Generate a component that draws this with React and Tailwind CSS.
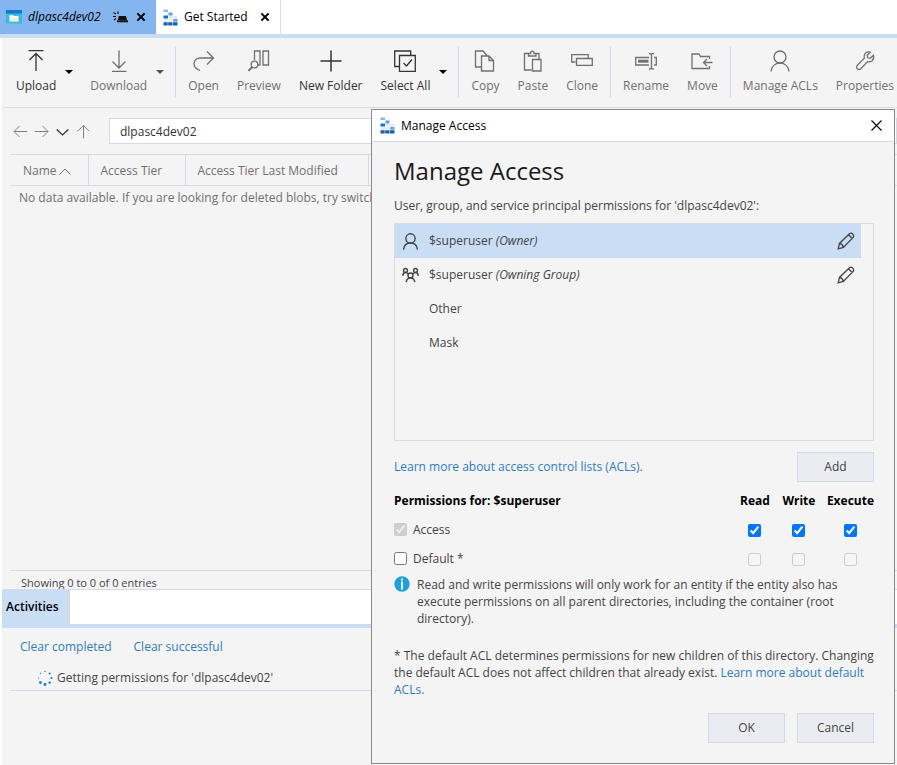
import React, { useState } from 'react';

const Icon = ({ size = 22, className = '', children }) => (
  <svg
    width={size}
    height={size}
    viewBox="0 0 22 22"
    fill="none"
    stroke="currentColor"
    strokeWidth="1.3"
    className={`shrink-0 ${className}`}
    aria-hidden="true"
  >
    {children}
  </svg>
);

const icons = {
  upload: <path d="M3.5 0.7h15M11 21V3.5M4.5 10L11 3.5l6.500 6.500" />,
  download: <path d="M4 21.300h14.500M11 0.500V17.500M4.500 11.500L11 18l6.500-6.500" />,
  open: <path d="M7 20.500C3 19 1 16.500 1 13.500 1 10 4 8 7 8h13.500M14 1.500L20.500 8 14 14.500" />,
  preview: (
    <>
      <path d="M6.500 10V1h5.500v14H10M15 1h5.500v14H15z" />
      <circle cx="6.500" cy="14.500" r="3.300" />
      <path d="M4.200 17L0.500 20.800" strokeWidth="1.800" />
    </>
  ),
  newFolder: <path d="M11 0.500v21M0.500 11h21" strokeWidth="1.500" />,
  selectAll: <path d="M5 16.500H0.700V1h16v4M5.500 5.500h15.800v15.800H5.500zM9.500 13l3 3 5.500-6.500" />,
  copy: <path d="M7.500 17H1.500V1h7.500l4 4.500M7.500 6h7.500l4.500 4.500v10.500H7.500zM15 6v4.500h4.500" />,
  paste: <path d="M9.500 20H2.500V3.500h4M13.500 3.500h3.500V9M6.500 6V3.500h2c0-3.300 3.500-3.300 3.500 0h2V6zM10.500 9.500h8.500v11.500h-8.500z" />,
  clone: <path d="M4.500 12H0.700V4.700h16.500V8.500M5.500 8.500h15.800v6.800H5.500z" />,
  rename: (
    <>
      <path d="M14 7.500H0.700v7.500H14M19 7.500h2.300v7.500H19M14 3.500c1.500 0 2.500 0.300 2.500 1.200 0-0.900 1-1.200 2.500-1.200M16.500 4.500v13.500M14 19c1.500 0 2.500-0.300 2.500-1.200 0 0.900 1 1.200 2.500 1.200" />
      <path d="M3 11.200h10.500" strokeWidth="3" />
    </>
  ),
  move: <path d="M18.500 16v2.500H1V4h7l1.500 2.500h9V9M21.500 12.500H12.500M16 9l-3.500 3.500L16 16" />,
  user: (
    <>
      <circle cx="11" cy="7" r="6" />
      <path d="M2 21.500c0.500-5 4-8.500 9-8.500s8.500 3.500 9 8.500" />
    </>
  ),
  wrench: <path d="M19.500 5.300l-3.300 3-2.500-0.500-0.500-2.500 3-3.100c-2.300-0.700-4.700 0.300-5.600 2.300-0.600 1.300-0.600 2.500-0.200 3.700L3.400 15.300c-1 1-1 2.500 0 3.400s2.500 1 3.400 0l6.900-7.100c1.500 0.500 2.900 0.200 4.100-0.700 1.700-1.400 2.200-3.600 1.700-5.600z" />,
  group: (
    <>
      <circle cx="11" cy="11" r="3.200" />
      <circle cx="4.500" cy="4.500" r="2.500" />
      <circle cx="17.500" cy="4.500" r="2.500" />
      <path d="M5.500 19.500c0.300-3.500 2.500-5.300 5.500-5.300s5.200 1.800 5.500 5.300M0.900 11.500c0.200-2.700 1.500-4.300 3.600-4.300 1.600 0 2.700 0.900 3.400 2M21.100 11.500c-0.200-2.700-1.500-4.300-3.600-4.300-1.600 0-2.700 0.900-3.400 2" />
    </>
  ),
  pencil: <path d="M1.500 20.500l1.500-6.500L15.500 1.800c2.500-1.500 5.800 1.500 4.500 4.500L7.800 18.800zM3 14c2.500 0.500 4.300 2.300 4.800 4.800M14 3.300l4.600 4.600" />,
  back: <path d="M21 11H2M9.500 3l-8 8 8 8" />,
  forward: <path d="M1 11h19M12.500 3l8 8-8 8" />,
  down: <path d="M2.500 8l8.500 8 8.500-8" strokeWidth="2" />,
  up: <path d="M11 21V2M2.500 10.500L11 2l8.500 8.500" />,
  close: <path d="M3 3l16 16M19 3L3 19" strokeWidth="4.500" />,
  closeThin: <path d="M1 1l20 20M21 1L1 21" strokeWidth="2.200" />,
};

const StorageLogo = () => (
  <svg width="15" height="17" viewBox="0 0 15 17" className="shrink-0" aria-hidden="true">
    <path fill="#83b9f9" d="M0.500 0.500h4.500v2.500H0.500z" />
    <path fill="#5ea0ef" d="M5.500 3.500h4v3h-4z" />
    <path fill="#0078d4" d="M0.500 6.500h4.500v3H0.500z" />
    <path fill="#e3e8f0" d="M5.500 7h4v2.500h-4zM10.200 7h4v2.500h-4zM0.500 10.200h4.500v2.500H0.500zM5.500 10.200h4v2.500h-4z" />
    <path fill="#5ea0ef" d="M10.200 10h4.300v2.700h-4.300z" />
    <path fill="#1b5fa8" d="M0.500 13.200h4.200v3.200H0.500zM5.200 13.200h4.300v3.200H5.200zM10 13.200h4.500v3.200H10z" />
  </svg>
);

const ContainerIcon = () => (
  <svg width="16" height="14" viewBox="0 0 16 14" className="shrink-0" aria-hidden="true">
    <rect width="16" height="13.500" rx="1" fill="#32bedd" />
    <path fill="#0f78d0" d="M0 1a1 1 0 0 1 1-1h14a1 1 0 0 1 1 1v2.500H0z" />
    <path fill="#fff" d="M3.500 5h3.500l1 1h4.500v5.500h-9z" />
    <path fill="#fbeccb" d="M4 7.500h8v3.500H4z" />
  </svg>
);

const SirenIcon = () => (
  <svg width="15" height="12" viewBox="0 0 15 12" className="mr-0.5 shrink-0" aria-hidden="true">
    <path d="M5 9l0.700-4h7.300l1 4zM4 9.300h11V11.300H4z" fill="#111" />
    <path d="M0.500 1.500l2.500 1.500M0 5.500h3M5 0.500v2.500M1 9l2-1.500" stroke="#111" strokeWidth="1.200" fill="none" />
  </svg>
);

const Spinner = () => (
  <svg width="16" height="16" viewBox="0 0 16 16" fill="#0f78d0" className="shrink-0" aria-hidden="true">
    <circle cx="8" cy="1.500" r="0.700" />
    <circle cx="12.600" cy="3.400" r="1" />
    <circle cx="14.500" cy="8" r="1.100" />
    <circle cx="12.600" cy="12.600" r="1.200" />
    <circle cx="8" cy="14.500" r="1.400" />
    <circle cx="3.400" cy="12.600" r="1.400" />
    <circle cx="1.500" cy="8" r="0.600" />
    <circle cx="3.400" cy="3.400" r="0.600" />
  </svg>
);

const InfoIcon = () => (
  <svg width="16" height="16" viewBox="0 0 16 16" className="shrink-0" aria-hidden="true">
    <circle cx="8" cy="8" r="7.700" fill="#1ba1e2" />
    <path d="M7 2.500h2v2H7zM7 5.500h2v8H7z" fill="#fff" />
  </svg>
);

const toolbar = [
  [
    { label: 'Upload', icon: 'upload', menu: true, enabled: true },
    { label: 'Download', icon: 'download', menu: true },
  ],
  [
    { label: 'Open', icon: 'open' },
    { label: 'Preview', icon: 'preview' },
    { label: 'New Folder', icon: 'newFolder', enabled: true },
    { label: 'Select All', icon: 'selectAll', menu: true, enabled: true },
  ],
  [
    { label: 'Copy', icon: 'copy' },
    { label: 'Paste', icon: 'paste' },
    { label: 'Clone', icon: 'clone' },
  ],
  [
    { label: 'Rename', icon: 'rename' },
    { label: 'Move', icon: 'move' },
  ],
  [
    { label: 'Manage ACLs', icon: 'user' },
    { label: 'Properties', icon: 'wrench' },
  ],
];

const ToolbarButton = ({ label, icon, menu, enabled }) => (
  <div className={`flex items-center ${enabled ? 'text-[#333]' : 'text-[#707070]'}`}>
    <button type="button" className="flex flex-col items-center gap-1.5 px-[9px] whitespace-nowrap">
      <Icon>{icons[icon]}</Icon>
      <span className="leading-4">{label}</span>
    </button>
    {menu && (
      <button type="button" aria-label={`${label} options`} className="pr-2">
        <svg
          width="8"
          height="4"
          viewBox="0 0 8 4"
          className={enabled ? 'fill-black' : 'fill-[#555]'}
          aria-hidden="true"
        >
          <path d="M0 0h8L4 4z" />
        </svg>
      </button>
    )}
  </div>
);

const TabBar = () => (
  <div className="flex h-[38px] border-b-4 border-[#c9ddf5] bg-white text-black">
    <div className="flex w-[156px] items-center gap-1.5 bg-[#84b5ee] pl-1.5">
      <ContainerIcon />
      <span className="flex-1 italic">dlpasc4dev02</span>
      <SirenIcon />
      <button type="button" aria-label="Close dlpasc4dev02" className="pr-2.5">
        <Icon size={10}>{icons.close}</Icon>
      </button>
    </div>
    <div className="flex w-[125px] items-center gap-1.5 border-r border-[#d9dbe6] pl-[7px]">
      <StorageLogo />
      <span className="flex-1 whitespace-nowrap">Get Started</span>
      <button type="button" aria-label="Close Get Started" className="pr-2.5">
        <Icon size={10}>{icons.close}</Icon>
      </button>
    </div>
  </div>
);

const Toolbar = () => (
  <div className="flex h-[70px] items-center divide-x divide-[#d5d8e6] overflow-hidden border-b border-[#d9dbe6] pb-0.5 pl-0.5">
    {toolbar.map((group, i) => (
      <div key={i} className="flex h-[50px] shrink-0 items-center px-[3px]">
        {group.map((item) => (
          <ToolbarButton key={item.label} {...item} />
        ))}
      </div>
    ))}
  </div>
);

const PathBar = () => (
  <div className="flex h-[46px] items-center gap-1.5 pl-[11px] text-[#707070]">
    {['back', 'forward', 'down', 'up'].map((name) => (
      <button key={name} type="button" aria-label={name}>
        <Icon size={15} className={name === 'down' ? 'text-[#333]' : ''}>{icons[name]}</Icon>
      </button>
    ))}
    <input
      type="text"
      aria-label="Path"
      defaultValue="dlpasc4dev02"
      className="ml-3 h-[26px] flex-1 border border-[#d5d8e6] bg-white px-2.5 text-[#333]"
    />
  </div>
);

const BlobTable = () => (
  <div className="ml-[9px] flex-1 overflow-hidden border-b border-[#d5d8e6]">
    <table className="w-full border-y border-[#d5d8e6] text-left text-[#707070]">
      <thead>
        <tr className="h-[31px]">
          <th className="w-[77px] border-r border-[#d5d8e6] pt-0.5 pl-3 font-normal">
            <span className="flex items-center gap-0.5">
              Name
              <svg width="12" height="7" viewBox="0 0 12 7" fill="none" stroke="currentColor" aria-hidden="true">
                <path d="M0.500 6.500L6 1l5.500 5.500" />
              </svg>
            </span>
          </th>
          <th className="w-[97px] border-r border-[#d5d8e6] pt-0.5 pl-3 font-normal">Access Tier</th>
          <th className="w-[183px] border-r border-[#d5d8e6] pt-0.5 pl-3 font-normal">Access Tier Last Modified</th>
          <th></th>
        </tr>
      </thead>
    </table>
    <p className="pt-[3px] pl-2 whitespace-nowrap text-[#707070]">
      No data available. If you are looking for deleted blobs, try switching
    </p>
  </div>
);

const Activities = () => (
  <section className="h-[176px]">
    <div className="flex h-[39px] border-t border-b-4 border-t-[#d5d8e6] border-b-[#c9ddf5] bg-white">
      <h2 className="flex w-[68px] items-center border-r border-[#d5d8e6] bg-[#c9ddf5] pl-1 font-semibold text-black">
        Activities
      </h2>
    </div>
    <div className="flex gap-[22px] pt-2.5 pl-[18px] text-[#2f7cc4]">
      <button type="button">Clear completed</button>
      <button type="button">Clear successful</button>
    </div>
    <div className="mt-[9px] ml-[9px] flex items-center gap-1 border-b border-[#d5d8e6] pt-1 pb-[3px] pl-[26px]">
      <Spinner />
      <span>Getting permissions for 'dlpasc4dev02'</span>
    </div>
  </section>
);

const entities = [
  { name: '$superuser', role: '(Owner)', icon: 'user', editable: true },
  { name: '$superuser', role: '(Owning Group)', icon: 'group', editable: true },
  { name: 'Other' },
  { name: 'Mask' },
];

const EntityList = () => {
  const [selected, setSelected] = useState(0);

  return (
    <ul className="mt-2 h-[218px] border border-[#d9dbe6] pr-3">
      {entities.map(({ name, role, icon, editable }, i) => (
        <li
          key={i}
          onClick={() => setSelected(i)}
          className={`flex h-[34px] items-center pr-1.5 pl-[7px] ${i === selected ? 'bg-[#c9ddf5]' : ''}`}
        >
          <span className="w-[27px]">
            {icon && <Icon size={17} className="stroke-[1.8]">{icons[icon]}</Icon>}
          </span>
          <span className="flex-1">
            {name} {role && <em>{role}</em>}
          </span>
          {editable && (
            <button type="button" aria-label={`Edit ${name} ${role}`}>
              <Icon size={18} className="stroke-[1.6]">{icons.pencil}</Icon>
            </button>
          )}
        </li>
      ))}
    </ul>
  );
};

const DialogButton = ({ children }) => (
  <button type="button" className="h-[30px] w-[77px] border border-[#d5d8e6] bg-[#eaecf1]">
    {children}
  </button>
);

const PermissionsTable = () => (
  <table className="mt-2 w-full text-center">
    <thead>
      <tr className="h-[22px] font-bold text-black">
        <th className="text-left">Permissions for: $superuser</th>
        <th className="w-11">Read</th>
        <th className="w-11">Write</th>
        <th className="w-[52px] pl-1.5">Execute</th>
      </tr>
    </thead>
    <tbody>
      <tr className="h-[35px]">
        <td>
          <label className="flex items-center gap-1.5">
            <input type="checkbox" className="size-[13px]" defaultChecked disabled />
            Access
          </label>
        </td>
        <td><input type="checkbox" aria-label="Access read" className="size-[13px] align-middle" defaultChecked /></td>
        <td><input type="checkbox" aria-label="Access write" className="size-[13px] align-middle" defaultChecked /></td>
        <td className="pl-1.5"><input type="checkbox" aria-label="Access execute" className="size-[13px] align-middle" defaultChecked /></td>
      </tr>
      <tr className="h-[23px]">
        <td>
          <label className="flex items-center gap-1.5">
            <input type="checkbox" className="size-[13px]" />
            Default *
          </label>
        </td>
        <td><input type="checkbox" aria-label="Default read" className="size-[13px] align-middle" disabled /></td>
        <td><input type="checkbox" aria-label="Default write" className="size-[13px] align-middle" disabled /></td>
        <td className="pl-1.5"><input type="checkbox" aria-label="Default execute" className="size-[13px] align-middle" disabled /></td>
      </tr>
    </tbody>
  </table>
);

const ManageAccessDialog = () => (
  <div
    role="dialog"
    aria-labelledby="dialog-title"
    className="absolute top-[109px] right-0.5 w-[524px] border border-[#8a8a8a] bg-[#f4f4f4]"
  >
    <div className="flex h-8 items-center gap-1.5 border-b border-[#d9dbe6] bg-white pr-3 pl-2 text-black">
      <StorageLogo />
      <span className="flex-1">Manage Access</span>
      <button type="button" aria-label="Close">
        <Icon size={11}>{icons.closeThin}</Icon>
      </button>
    </div>
    <div className="pt-[11px] pr-5 pb-5 pl-[22px]">
      <h1 id="dialog-title" className="text-[24px] leading-9 text-[#1a1a1a]">Manage Access</h1>
      <p className="mt-2">User, group, and service principal permissions for 'dlpasc4dev02':</p>
      <EntityList />
      <div className="mt-[11px] flex items-center justify-between">
        <a href="#acls" className="text-[#2f7cc4]">Learn more about access control lists (ACLs).</a>
        <DialogButton>Add</DialogButton>
      </div>
      <PermissionsTable />
      <div className="mt-1.5 flex gap-[7px] pr-6 leading-[17px]">
        <InfoIcon />
        <p>
          Read and write permissions will only work for an entity if the entity also has execute permissions on all
          parent directories, including the container (root directory).
        </p>
      </div>
      <p className="mt-5 leading-[17px]">
        * The default ACL determines permissions for new children of this directory. Changing the default ACL does not
        affect children that already exist.{' '}
        <a href="#default-acls" className="text-[#2f7cc4]">Learn more about default ACLs.</a>
      </p>
      <div className="mt-[15px] flex justify-end gap-3">
        <DialogButton>OK</DialogButton>
        <DialogButton>Cancel</DialogButton>
      </div>
    </div>
  </div>
);

export default function App() {
  return (
    <div className="relative flex min-h-screen flex-col overflow-hidden bg-[#f4f4f4] font-['Open_Sans','Noto_Sans',sans-serif] text-[12px] leading-[18px] text-[#444]">
      <TabBar />
      <main className="flex flex-1 flex-col border-l-2 border-white">
        <Toolbar />
        <PathBar />
        <BlobTable />
        <p className="h-[18px] overflow-hidden pt-1 pl-[19px] text-[11px] leading-4">Showing 0 to 0 of 0 entries</p>
        <Activities />
      </main>
      <ManageAccessDialog />
    </div>
  );
}
